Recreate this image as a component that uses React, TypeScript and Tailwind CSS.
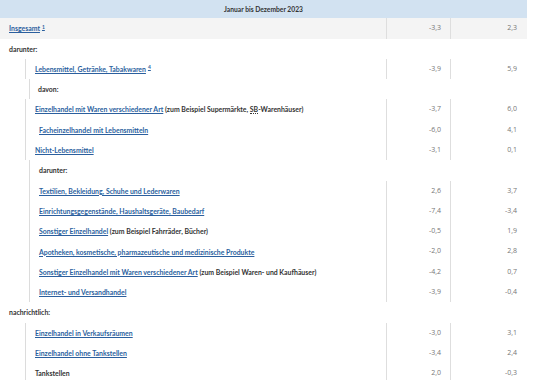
import React from "react";

type Row = {
  label: React.ReactNode;
  line?: number; // x of vertical guide line
  pad?: number; // text offset after line
  v1?: string;
  v2?: string;
  shade?: boolean;
};

const Link = ({ children }: { children: React.ReactNode }) => (
  <span className="text-[#2b5f9e] underline decoration-[#2b5f9e] underline-offset-[1px]">
    {children}
  </span>
);

const Sup = ({ n }: { n: string }) => (
  <sup className="ml-[2px] text-[5px] text-[#2b5f9e] underline">{n}</sup>
);

const rows: Row[] = [
  {
    label: (
      <>
        <Link>Insgesamt</Link>
        <Sup n="1" />
      </>
    ),
    v1: "-3,3",
    v2: "2,3",
    shade: true,
  },
  { label: "darunter:" },
  {
    label: (
      <>
        <Link>Lebensmittel, Getränke, Tabakwaren</Link>
        <Sup n="4" />
      </>
    ),
    line: 25,
    pad: 9,
    v1: "-3,9",
    v2: "5,9",
  },
  { label: "davon:", line: 29, pad: 8 },
  {
    label: (
      <>
        <Link>Einzelhandel mit Waren verschiedener Art</Link> (zum Beispiel Supermärkte,{" "}
        <span className="border-b border-dotted border-[#333]">SB</span>-Warenhäuser)
      </>
    ),
    line: 25,
    pad: 9,
    v1: "-3,7",
    v2: "6,0",
  },
  { label: <Link>Facheinzelhandel mit Lebensmitteln</Link>, line: 25, pad: 13, v1: "-6,0", v2: "4,1" },
  { label: <Link>Nicht-Lebensmittel</Link>, line: 25, pad: 9, v1: "-3,1", v2: "0,1" },
  { label: "darunter:", line: 29, pad: 9 },
  { label: <Link>Textilien, Bekleidung, Schuhe und Lederwaren</Link>, line: 29, pad: 9, v1: "2,6", v2: "3,7" },
  { label: <Link>Einrichtungsgegenstände, Haushaltsgeräte, Baubedarf</Link>, line: 29, pad: 9, v1: "-7,4", v2: "-3,4" },
  {
    label: (
      <>
        <Link>Sonstiger Einzelhandel</Link> (zum Beispiel Fahrräder, Bücher)
      </>
    ),
    line: 29,
    pad: 9,
    v1: "-0,5",
    v2: "1,9",
  },
  {
    label: <Link>Apotheken, kosmetische, pharmazeutische und medizinische Produkte</Link>,
    line: 29,
    pad: 9,
    v1: "-2,0",
    v2: "2,8",
  },
  {
    label: (
      <>
        <Link>Sonstiger Einzelhandel mit Waren verschiedener Art</Link> (zum Beispiel Waren- und Kaufhäuser)
      </>
    ),
    line: 29,
    pad: 9,
    v1: "-4,2",
    v2: "0,7",
  },
  { label: <Link>Internet- und Versandhandel</Link>, line: 29, pad: 9, v1: "-3,9", v2: "-0,4" },
  { label: "nachrichtlich:" },
  { label: <Link>Einzelhandel in Verkaufsräumen</Link>, line: 25, pad: 9, v1: "-3,0", v2: "3,1" },
  { label: <Link>Einzelhandel ohne Tankstellen</Link>, line: 25, pad: 9, v1: "-3,4", v2: "2,4" },
  { label: "Tankstellen", line: 25, pad: 9, v1: "2,0", v2: "-0,3" },
];

export default function App() {
  return (
    <div className="w-[550px] h-[380px] overflow-hidden bg-white font-['Open_Sans',sans-serif] text-[7px]">
      <div className="w-[527px]">
        {/* Header */}
        <div className="h-[18.3px] bg-[#d2e2f1] flex items-center justify-center font-['Lato',sans-serif] font-bold text-[6.7px] text-[#333]">
          Januar bis Dezember 2023
        </div>

        {rows.map((r, i) => {
          const hasValues = r.v1 !== undefined;
          return (
            <div key={i} className={`flex h-[20.3px] ${r.shade ? "bg-[#f4f4f4]" : ""}`}>
              <div className="w-[386px] flex items-stretch font-['Lato',sans-serif] font-bold text-[6.9px] text-[#333] whitespace-nowrap">
                {r.line !== undefined ? (
                  <div
                    className="flex items-center border-l border-[#dcdcdc]"
                    style={{ marginLeft: r.line, paddingLeft: r.pad }}
                  >
                    <span>{r.label}</span>
                  </div>
                ) : (
                  <div className="flex items-center pl-[9px]">
                    <span>{r.label}</span>
                  </div>
                )}
              </div>
              <div
                className={`w-[64px] flex items-center justify-end pr-[9px] text-[#777] ${
                  hasValues ? "border-l border-[#dedede]" : ""
                }`}
              >
                {r.v1}
              </div>
              <div
                className={`w-[77px] flex items-center justify-end pr-[10px] text-[#777] ${
                  hasValues ? "border-l border-[#dedede]" : ""
                }`}
              >
                {r.v2}
              </div>
            </div>
          );
        })}
      </div>
    </div>
  );
}
